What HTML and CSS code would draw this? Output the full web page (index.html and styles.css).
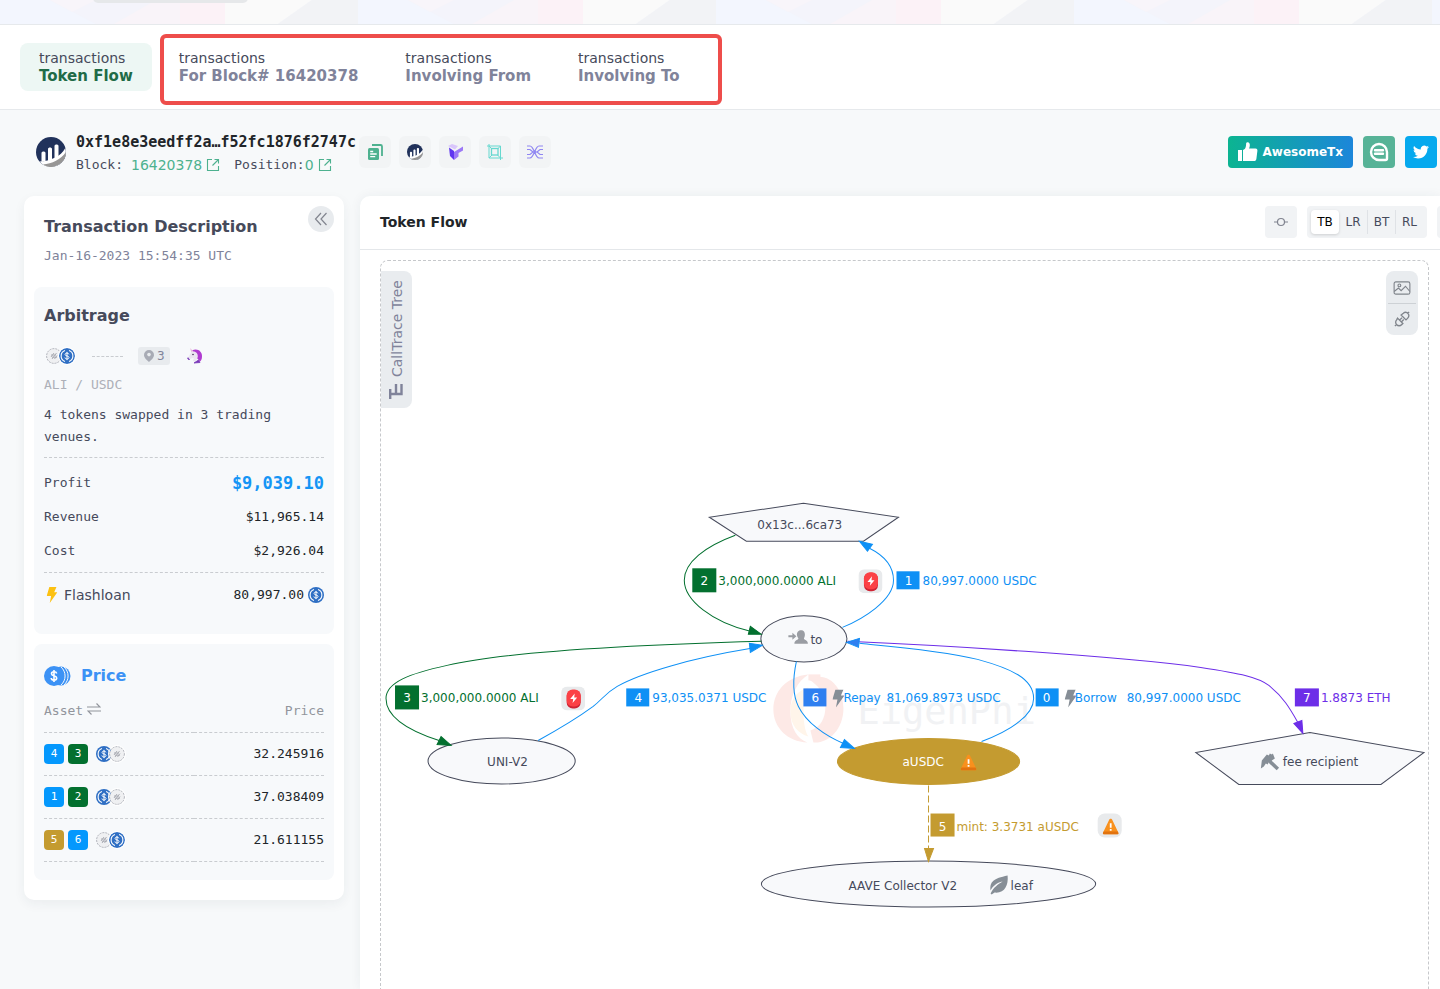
FILE: index.html
```html
<!DOCTYPE html>
<html lang="en">
<head>
    <meta charset="UTF-8">
    <meta name="viewport" content="width=device-width, initial-scale=1.0">
    <title>Token Flow</title>
    <link rel="stylesheet" href="styles.css">
</head>
<body>
    <!-- shared icons -->
    <svg class="defs" width="0" height="0" aria-hidden="true">
        <symbol id="usdc" viewBox="0 0 16 16">
            <circle cx="8" cy="8" r="8" fill="#2f6fc4"/>
            <path d="M6 2.600a5.700 5.700 0 0 0 0 10.800M10 2.600a5.700 5.700 0 0 1 0 10.800" fill="none" stroke="#fff" stroke-width="1.100"/>
            <path d="M9.900 6.400C9.700 5.500 9 5.100 8 5.100c-1.100 0-1.900.5-1.900 1.400 0 2 3.900.9 3.900 3 0 .9-.8 1.500-2 1.500s-2-.5-2.100-1.500M8 3.900v8.200" fill="none" stroke="#fff" stroke-width="1"/>
        </symbol>
        <symbol id="ali" viewBox="0 0 16 16">
            <circle cx="8" cy="8" r="7.400" fill="#eff0f2" stroke="#a9abb3" stroke-width=".9" stroke-dasharray="2 1"/>
            <path d="M5 9l3-4M6 11l4.500-6M8.500 11l2.500-3.500M5 7h5M6 9.200h5" fill="none" stroke="#a5a7af" stroke-width=".9"/>
        </symbol>
        <symbol id="etherscan" viewBox="0 0 30 30">
            <circle cx="15" cy="15" r="15" fill="#21325b"/>
            <path d="M3.500 24.500C14 24 25 19.500 29.300 11A15 15 0 0 1 7 27.700z" fill="#fff"/>
            <path d="M5.500 25V16c0-2 4-2 4 0v8zM12 24V12c0-2 4-2 4 0v11zM18.500 22V9c0-2 4-2 4 0v11z" fill="#fff"/>
            <path d="M7 27.600c9-1 18-5 22.900-12.600A14.950 14.950 0 0 1 7 27.600z" fill="#979695"/>
        </symbol>
        <symbol id="external" viewBox="0 0 14 14">
            <path d="M6 1.500H1.500v11h11V8M8.500 1.500h4v4M12.500 1.500L6.500 7.500" fill="none" stroke="#4db18f" stroke-width="1.100"/>
        </symbol>
        <symbol id="siren" viewBox="0 0 24 24">
            <rect width="24" height="24" rx="6" fill="#e8eaec"/>
            <rect x="5.500" y="3.500" width="14" height="18.500" rx="6" fill="#cf2434"/>
            <rect x="5.500" y="3" width="14" height="17" rx="6" fill="#fb4146"/>
            <path d="M13.500 7l-4.500 5.600h3L11.400 16.500l4.600-5.500h-3z" fill="#fff"/>
        </symbol>
        <symbol id="warn" viewBox="0 0 16 16">
            <path d="M8 0c.8 0 1.100.6 1.500 1.300L15.600 14c.5 1.100.2 2-1 2H1.400c-1.200 0-1.500-.9-1-2L6.500 1.300C6.900.6 7.200 0 8 0z" fill="#f8901d"/>
            <path d="M1 13h14l.6 1c.5 1.100.2 2-1 2H1.400c-1.200 0-1.500-.9-1-2z" fill="#e2730f"/>
            <path d="M8 4.800v4.400M8 10.500v1.800" stroke="#fff" stroke-width="1.800"/>
        </symbol>
        <symbol id="bolt" viewBox="0 0 12 18">
            <path d="M3 0h8L8.500 6H12L3.500 18 5 10H0z"/>
        </symbol>
    </svg>

    <div class="page">
        <div class="banner">
            <svg width="100%" height="24" aria-hidden="true">
                <defs>
                    <pattern id="facets" width="358" height="24" patternUnits="userSpaceOnUse">
                        <rect width="358" height="24" fill="#f3f6fe"/>
                        <path d="M50 0h130v24H96z" fill="#f4f4fb"/>
                        <path d="M50 0h46L72 12z" fill="#f8f5fa"/>
                        <path d="M156 0h24v24h-66z" fill="#f9f4f9"/>
                        <rect x="180" width="45" height="24" fill="#fcf2f7"/>
                        <path d="M225 0h87l-34 24h-53z" fill="#fafafa"/>
                        <path d="M312 0h46v24h-80z" fill="#f2f3f6"/>
                    </pattern>
                </defs>
                <rect width="100%" height="24" fill="url(#facets)"/>
                <rect x="93" y="-9" width="155" height="12" rx="5" fill="#e6e8ea"/>
            </svg>
        </div>

        <nav class="tabs">
            <a class="tab active" href="#token-flow"><span>transactions</span><b>Token Flow</b></a>
            <div class="tab-group">
                <a class="tab" href="#block"><span>transactions</span><b>For Block# 16420378</b></a>
                <a class="tab" href="#from"><span>transactions</span><b>Involving From</b></a>
                <a class="tab" href="#to"><span>transactions</span><b>Involving To</b></a>
            </div>
        </nav>

        <header class="tx-header">
            <svg class="tx-logo" width="30" height="30" aria-hidden="true"><use href="#etherscan"/></svg>
            <div class="tx-info">
                <h1>0xf1e8e3eedff2a…f52fc1876f2747c</h1>
                <p>
                    <span>Block:</span>
                    <a class="block-link" href="#block">16420378 <svg width="14" height="14"><use href="#external"/></svg></a>
                    <span class="position">Position:</span>
                    <a href="#position">0 <svg width="14" height="14"><use href="#external"/></svg></a>
                </p>
            </div>
            <div class="tools">
                <button class="tool" aria-label="Copy">
                    <svg width="16" height="16" viewBox="0 0 16 16"><path d="M5 1h8.500A1.500 1.500 0 0 1 15 2.500V12" fill="none" stroke="#4db18f" stroke-width="1.800"/><rect x="1" y="4" width="11" height="12" rx="1.500" fill="#4db18f"/><path d="M3.200 7.500h3M3.200 10h6.500M3.200 12.600h5" stroke="#fff" stroke-width="1.300"/></svg>
                </button>
                <button class="tool" aria-label="Etherscan"><svg width="16" height="16"><use href="#etherscan"/></svg></button>
                <button class="tool" aria-label="Tenderly">
                    <svg width="16" height="16" viewBox="0 0 16 16"><path d="M1 2l4-2 6 2-3 3.500z" fill="#d9c6fb"/><path d="M2 3.500l5 3.500v9l-4-4z" fill="#6037f0"/><path d="M7 16V8l9-5.500v4L11.500 9v3.500z" fill="#9c78f6"/></svg>
                </button>
                <button class="tool" aria-label="Blocks">
                    <svg width="16" height="16" viewBox="0 0 16 16" fill="none" stroke="#66d8cf"><path d="M2 0v14h14M0 2h13.500v14M2 2l3 3M13.500 2l-3 3M2 14l3-3M13.500 14l-3-3"/><rect x="4.500" y="4.500" width="6.500" height="6.500" stroke-width="1.300"/></svg>
                </button>
                <button class="tool" aria-label="Trace">
                    <svg width="16" height="16" viewBox="0 0 16 16" fill="none" stroke="#8f86f2" stroke-width="1.200"><path d="M0 2h3c4 0 5 12 9 12h4M0 14h3c4 0 5-12 9-12h4M0 5.500h3L6 8l-3 2.500H0M16 5.500h-3L10 8l3 2.500h3"/><circle cx="8" cy="8" r="1"/></svg>
                </button>
            </div>
            <div class="share">
                <button class="awesome">
                    <svg width="20" height="20" viewBox="0 0 20 20" fill="#fff"><path d="M0 8h4v11H0zM5 8c3-1 3-4 3.200-7 .3-1.200 3-1.200 3.500 1 .3 1.700 0 3-.7 4.500h6.500c1.500 0 2 1 1.900 2.200l-1 8c-.2 1.400-1 2.300-2.400 2.300H5z"/></svg>
                    AwesomeTx
                </button>
                <button class="square comment" aria-label="Comments">
                    <svg width="20" height="20" viewBox="0 0 20 20" fill="none" stroke="#fff"><path d="M10 2a8 8 0 1 0 0 16h6.500a1.500 1.500 0 0 0 1.500-1.500V10A8 8 0 0 0 10 2z" stroke-width="2.400"/><path d="M6 8.200h8M6 11.800h8" stroke-width="2.400" stroke-linecap="round"/></svg>
                </button>
                <button class="square twitter" aria-label="Twitter">
                    <svg width="16" height="16" viewBox="0 0 24 24" fill="#fff"><path d="M23.950 4.570a10 10 0 0 1-2.820.77 4.960 4.960 0 0 0 2.160-2.720c-.95.550-2 .95-3.130 1.180a4.920 4.920 0 0 0-8.380 4.480A13.930 13.930 0 0 1 1.640 3.160a4.920 4.920 0 0 0 1.520 6.570 4.900 4.900 0 0 1-2.230-.61v.06a4.920 4.920 0 0 0 3.950 4.830 5 5 0 0 1-2.210.08 4.940 4.940 0 0 0 4.600 3.420A9.870 9.870 0 0 1 0 19.540a14 14 0 0 0 7.550 2.210c9.050 0 14-7.500 14-13.980l-.02-.64a9.940 9.940 0 0 0 2.420-2.560z"/></svg>
                </button>
            </div>
        </header>

        <main class="content">
            <aside class="sidebar">
                <div class="side-head">
                    <div>
                        <h2>Transaction Description</h2>
                        <p class="date">Jan-16-2023 15:54:35 UTC</p>
                    </div>
                    <button class="collapse" aria-label="Collapse">
                        <svg width="14" height="14" viewBox="0 0 14 14" fill="none" stroke="#82858f" stroke-width="1.200"><path d="M7 1L1.500 7 7 13M12.500 1L7 7l5.500 6"/></svg>
                    </button>
                </div>

                <section class="card">
                    <h2>Arbitrage</h2>
                    <div class="route">
                        <span class="pair"><svg width="16" height="16"><use href="#ali"/></svg><svg width="16" height="16"><use href="#usdc"/></svg></span>
                        <span class="dash"></span>
                        <span class="venues"><svg width="10" height="12" viewBox="0 0 10 12"><path d="M5 0a5 5 0 0 1 5 5c0 3-3 5-5 7-2-2-5-4-5-7a5 5 0 0 1 5-5z" fill="#a8abb5"/><circle cx="5" cy="4.600" r="1.800" fill="#e8ebee"/></svg>3</span>
                        <svg width="16" height="16" viewBox="0 0 16 16"><path d="M5 2.500C10-.5 15 3 15 8c0 3-.5 4-2 5.500L9 9z" fill="#b03bd0"/><path d="M3 0l3.500 3.500-2 1z" fill="#e9b8dc"/><path d="M4.500 3.800C8 3 11 5 10.800 8.500c0 2-1.800 3-2.300 5.500L6 13c.5-2 1-2 .5-3-2-.5-3 1.500-4.500 1C.5 9.500 3 7 4.500 3.800z" fill="#ece6f1"/><path d="M1 9.500c-.8 1 0 2.500 1.800 2M7 15l4.500-3 1.500 2.500z" fill="#7839b8" stroke="#7839b8" stroke-width=".8"/><circle cx="6" cy="6.500" r=".8" fill="#443355"/></svg>
                    </div>
                    <p class="pair-name">ALI / USDC</p>
                    <p class="summary">4 tokens swapped in 3 trading venues.</p>
                    <dl class="figures">
                        <div><dt>Profit</dt><dd class="profit">$9,039.10</dd></div>
                        <div><dt>Revenue</dt><dd>$11,965.14</dd></div>
                        <div><dt>Cost</dt><dd>$2,926.04</dd></div>
                    </dl>
                    <dl class="figures loan">
                        <div>
                            <dt><svg width="12" height="16" viewBox="0 0 12 18" fill="#fcc112"><use href="#bolt" width="12" height="18"/></svg>Flashloan</dt>
                            <dd>80,997.00<svg width="16" height="16"><use href="#usdc"/></svg></dd>
                        </div>
                    </dl>
                </section>

                <section class="card price-card">
                    <h2><svg width="27" height="20" viewBox="0 0 27 20"><circle cx="17" cy="10" r="9.500" fill="#3c92f5"/><path d="M17 1a12 12 0 0 1 0 18M20 1a12 12 0 0 1 0 18" fill="none" stroke="#f7f9fb" stroke-width="1"/><circle cx="10" cy="10" r="10" fill="#3c92f5"/><path d="M12.700 7.500c-.3-1.200-1.300-1.700-2.700-1.700s-2.500.6-2.500 1.900c0 2.700 5.200 1.500 5.200 4.300 0 1.400-1.200 2.100-2.700 2.100S7.300 13.400 7.200 12M10 4v12" fill="none" stroke="#fff" stroke-width="1.600"/></svg>Price</h2>
                    <table>
                        <thead>
                            <tr><th>Asset <svg width="14" height="12" viewBox="0 0 14 12" fill="none" stroke="#92959c" stroke-width="1.200"><path d="M0 4h13L9.500.5M14 8H1l3.500 3.500"/></svg></th><th>Price</th></tr>
                        </thead>
                        <tbody>
                            <tr>
                                <td><span class="asset"><i class="badge blue">4</i><i class="badge green">3</i><span class="pair"><svg width="16" height="16"><use href="#usdc"/></svg><svg width="16" height="16"><use href="#ali"/></svg></span></span></td>
                                <td>32.245916</td>
                            </tr>
                            <tr>
                                <td><span class="asset"><i class="badge blue">1</i><i class="badge green">2</i><span class="pair"><svg width="16" height="16"><use href="#usdc"/></svg><svg width="16" height="16"><use href="#ali"/></svg></span></span></td>
                                <td>37.038409</td>
                            </tr>
                            <tr>
                                <td><span class="asset"><i class="badge gold">5</i><i class="badge blue">6</i><span class="pair"><svg width="16" height="16"><use href="#ali"/></svg><svg width="16" height="16"><use href="#usdc"/></svg></span></span></td>
                                <td>21.611155</td>
                            </tr>
                        </tbody>
                    </table>
                </section>
            </aside>

            <section class="panel">
                <div class="panel-head">
                    <h2>Token Flow</h2>
                    <button class="node-btn" aria-label="Node"><svg width="14" height="10" viewBox="0 0 14 10" fill="none" stroke="#80838f" stroke-width="1.200"><path d="M0 5h3.500M10.500 5H14"/><circle cx="7" cy="5" r="3.500"/></svg></button>
                    <div class="directions">
                        <button class="on">TB</button>
                        <button>LR</button>
                        <button>BT</button>
                        <button>RL</button>
                    </div>
                    <button class="node-btn more" aria-label="More"></button>
                </div>

                <div class="graph">
                    <svg class="flow" viewBox="381 261 1046 728">
                        <!-- watermark -->
                        <g class="watermark">
                            <path d="M808 674c-22 2-35 17-35 35s14 32 34 33c-10-4-17-14-17-31s7-30 18-37z" fill="#fde9e6"/>
                            <path d="M808 679c20-10 35 9 35 29s-14 35-30 34l-3-12c10-3 15-12 15-24s-7-22-17-27z" fill="#fde9e6"/>
                            <path d="M808 687c-14 4-18 15-18 24 0 14 8 22 18 25-6-8-7-39 0-49z" fill="#fff5ea"/>
                            <path d="M808 674h12v6h-12z" fill="#fde9e6"/>
                            <text x="857" y="724">EigenPhi</text>
                        </g>

                        <!-- nodes -->
                        <g class="node">
                            <path d="M803 503l95 14-35 24H746l-37-24z"/>
                            <ellipse cx="803.500" cy="638.500" rx="43" ry="23"/>
                            <ellipse cx="501.500" cy="760.500" rx="73.500" ry="23"/>
                            <ellipse class="token" cx="928" cy="761" rx="91" ry="23"/>
                            <ellipse cx="928" cy="883.500" rx="167" ry="23"/>
                            <path d="M1309 732l114 20-43 32h-142l-43-32z"/>
                            <text x="757" y="529">0x13c...6ca73</text>
                            <text x="810" y="644">to</text>
                            <text x="487" y="766">UNI-V2</text>
                            <text class="light" x="902" y="766">aUSDC</text>
                            <text x="848" y="889">AAVE Collector V2</text>
                            <text x="1010" y="889">leaf</text>
                            <text x="1282" y="766">fee recipient</text>
                        </g>
                        <g fill="#9a9da3">
                            <path d="M788 635h4v-2.500l4 3.500-4 3.500V637h-4z"/>
                            <path d="M800.500 630c3 0 4 2 4 4.500 0 2-1 3-1 4 1 1.500 4 1.500 4 5H794c0-3.500 3-3.500 4-5 0-1-1.500-2-1.500-4s1-4.500 4-4.500z"/>
                        </g>
                        <path d="M1007 875c1 10-3 18-13 17l-3 2-1-1c3-6 7-9 12-12-6 1-10 5-12 9-1-9 3-12 17-15z" fill="#868e96"/>
                        <path d="M1260 768l1-8 5-6 2 1 1-2 2 1 1-1 2 5-3 2-1 2-2-1-1 3-2-1-2 3z" fill="#868e96"/>
                        <path d="M1268 760l9 8.500" stroke="#868e96" stroke-width="3.600"/>
                        <use href="#warn" x="960" y="754" width="16" height="16"/>

                        <!-- edges -->
                        <g class="edge c-green">
                            <path d="M735 535C705 546 684 562 684 580C684 600 712 622 750 631"/>
                            <path d="M761 641C690 643 520 648 447 665C410 673 386 682 386 698C386 716 408 730 439 740"/>
                            <path class="tip" d="M761 634l-11-8-2 8z"/>
                            <path class="tip" d="M451 745l-10-9-4 8z"/>
                        </g>
                        <g class="edge c-purple">
                            <path d="M847 641C940 645 1110 655 1200 667C1240 673 1258 677 1268 685C1282 696 1289 708 1297 722"/>
                            <path class="tip" d="M1302 733l-1-13-8 3z"/>
                        </g>
                        <g class="edge c-blue">
                            <path d="M842 627C862 619 893 600 893 580C893 568 887 557 869 548"/>
                            <path d="M538 740C560 728 578 717 593 706C603 698 605 693 617 686C640 673 690 658 751 648"/>
                            <path d="M796 661C793 675 791 692 798 706C806 722 824 735 843 743"/>
                            <path d="M981 741C1010 730 1033 715 1033 698C1033 678 1010 668 977 659C940 650 890 646 859 643"/>
                            <path class="tip" d="M859 541l13 3-5 7z"/>
                            <path class="tip" d="M762 645l-13-2 1 9z"/>
                            <path class="tip" d="M854 748l-10-9-4 8z"/>
                            <path class="tip mix" d="M846 642l13-4-1 9z"/>
                        </g>
                        <g class="edge c-gold">
                            <path d="M928 785v64" stroke-dasharray="7 3"/>
                            <path class="tip" d="M928 861l-4-13h9z"/>
                        </g>

                        <!-- edge labels -->
                        <g class="label c-green">
                            <rect x="692" y="568" width="24" height="24"/><text class="num" x="704" y="585">2</text>
                            <text x="718" y="585">3,000,000.0000 ALI</text>
                            <rect x="395" y="685" width="24" height="24"/><text class="num" x="407" y="702">3</text>
                            <text x="421" y="702">3,000,000.0000 ALI</text>
                        </g>
                        <g class="label c-blue">
                            <rect x="896" y="571" width="23" height="18"/><text class="num" x="908" y="585">1</text>
                            <text x="922" y="585">80,997.0000 USDC</text>
                            <rect x="626" y="688" width="23" height="18"/><text class="num" x="638" y="702">4</text>
                            <text x="652" y="702">93,035.0371 USDC</text>
                            <rect class="mix" x="803" y="688" width="23" height="18"/><text class="num" x="815" y="702">6</text>
                            <use class="flash" href="#bolt" x="832" y="689" width="12" height="18"/>
                            <text x="843" y="702">Repay</text><text x="886" y="702">81,069.8973 USDC</text>
                            <rect x="1035" y="688" width="23" height="18"/><text class="num" x="1046" y="702">0</text>
                            <use class="flash" href="#bolt" x="1064" y="689" width="12" height="18"/>
                            <text x="1074" y="702">Borrow</text><text x="1126" y="702">80,997.0000 USDC</text>
                        </g>
                        <g class="label c-gold">
                            <rect x="930" y="813" width="24" height="23"/><text class="num" x="942" y="830">5</text>
                            <text x="956" y="830">mint: 3.3731 aUSDC</text>
                        </g>
                        <g class="label c-purple">
                            <rect x="1294" y="688" width="24" height="18"/><text class="num" x="1306" y="702">7</text>
                            <text x="1320" y="702">1.8873 ETH</text>
                        </g>
                        <use href="#siren" x="858" y="569" width="24" height="24"/>
                        <use href="#siren" x="561" y="686" width="24" height="24"/>
                        <rect x="1097" y="813" width="24" height="24" rx="7" fill="#e8eaec"/>
                        <use href="#warn" x="1102" y="818" width="16" height="16"/>
                    </svg>

                    <button class="calltrace">
                        <svg width="16" height="16" viewBox="0 0 16 16" fill="none" stroke="#80839a" stroke-width="2.400"><path d="M0 2.200h10M5 2v11.500h10M5 8h10"/></svg>
                        CallTrace Tree
                    </button>
                    <div class="graph-tools">
                        <button aria-label="Save image"><svg width="18" height="14" viewBox="0 0 20 16" fill="none" stroke="#80858c" stroke-width="1.300"><rect x="1" y="1" width="18" height="14" rx="2"/><circle cx="7" cy="5" r="1.600"/><path d="M1 12l5-4 3 3 5-5 5 6"/></svg></button>
                        <button aria-label="Copy link"><svg width="16" height="16" viewBox="0 0 18 18" fill="none" stroke="#80858c" stroke-width="1.500"><path d="M1 17l2-2M15 3l2-2M8 4.500l5.500 5.500 2-2a3.600 3.600 0 0 0-5-5.500zM4 8l6 6-1.500 1.500a3.800 3.800 0 0 1-5.500-5.500zM6.500 10l2.500-2.500M8.500 12l2.500-2.500"/></svg></button>
                    </div>
                </div>
            </section>
        </main>
    </div>
</body>
</html>
```
FILE: styles.css
```css
* {
    box-sizing: border-box;
}
body {
    font-family: "DejaVu Sans", Verdana, sans-serif;
    font-size: 14px;
    color: #464a5b;
    margin: 0;
    background-color: #f7f9fa;
}
h1, h2, p, dl, dd {
    margin: 0;
}
h2 {
    font-size: 16px;
    line-height: 24px;
}
a {
    text-decoration: none;
}
button {
    font-family: inherit;
    border: none;
    padding: 0;
    display: flex;
    align-items: center;
    justify-content: center;
    cursor: pointer;
}
svg {
    display: block;
    flex-shrink: 0;
}
.defs {
    position: absolute;
}
.page {
    height: 100vh;
    display: flex;
    flex-direction: column;
    overflow: hidden;
}
.banner {
    border-bottom: 1px solid #e6e9ec;
}

/* tabs */
.tabs {
    display: flex;
    align-items: center;
    gap: 8px;
    padding: 8px 20px 4px;
    min-height: 85px;
    background-color: #fff;
    border-bottom: 1px solid #e6e9ec;
}
.tab {
    line-height: 18px;
    color: #464a5b;
    white-space: nowrap;
}
.tab span, .tab b {
    display: block;
}
.tab b {
    font-size: 15px;
    color: #80839a;
}
.tab.active {
    padding: 6px 19px;
    margin-bottom: 4px;
    border-radius: 8px;
    background-color: #edf7f4;
}
.tab.active b {
    color: #1f6b47;
}
.tab-group {
    display: flex;
    gap: 47px;
    padding: 11px 38px 16px 15px;
    border: 4px solid #ee4d4b;
    border-radius: 6px;
}

/* header */
.tx-header {
    display: flex;
    align-items: center;
    padding: 18px 3px 20px 36px;
}
.tx-info {
    margin: 0 10px;
    padding-top: 2px;
    font-family: "DejaVu Sans Mono", monospace;
}
.tx-info h1 {
    font-size: 15px;
    line-height: 24px;
    color: #212529;
    width: 273px;
    white-space: nowrap;
}
.tx-info p {
    display: flex;
    align-items: center;
    font-size: 13px;
    line-height: 22px;
}
.tx-info a {
    display: flex;
    align-items: center;
    gap: 4px;
    font: 14px/22px "DejaVu Sans", sans-serif;
    color: #4db18f;
}
.block-link {
    margin-left: 8px;
}
.position {
    margin-left: 14px;
}
.tools {
    display: flex;
    gap: 8px;
}
.tool {
    width: 32px;
    height: 32px;
    border-radius: 6px;
    background-color: #f2f4f5;
}
.share {
    display: flex;
    gap: 10px;
    margin-left: auto;
}
.awesome {
    gap: 5px;
    height: 32px;
    padding: 0 10px;
    border-radius: 4px;
    background: linear-gradient(90deg, #0cb491, #1c86da);
    color: #fff;
    font-size: 12px;
    font-weight: bold;
}
.square {
    width: 32px;
    height: 32px;
    border-radius: 4px;
}
.comment {
    background-color: #57b397;
}
.twitter {
    background-color: #06a9ee;
}

/* sidebar */
.content {
    flex: 1;
    display: flex;
    align-items: flex-start;
    gap: 16px;
    padding-left: 24px;
    min-height: 0;
}
.sidebar {
    flex: 0 0 320px;
    padding: 10px 10px 20px;
    border-radius: 10px;
    background-color: #fff;
    box-shadow: 0 4px 12px rgba(40,50,60,0.06);
}
.side-head {
    display: flex;
    justify-content: space-between;
    padding: 0 0 20px 10px;
}
.side-head h2 {
    margin-top: 9px;
}
.date {
    font: 13px/20px "DejaVu Sans Mono", monospace;
    margin-top: 7px;
    padding-bottom: 1px;
    color: #80839a;
}
.collapse {
    width: 26px;
    height: 26px;
    border-radius: 50%;
    background-color: #e8ebee;
}
.card {
    padding: 17px 10px 22px;
    border-radius: 8px;
    background-color: #f7f9fb;
    font-family: "DejaVu Sans Mono", monospace;
    font-size: 13px;
}
.card h2 {
    font-family: "DejaVu Sans", sans-serif;
}
.route {
    display: flex;
    align-items: center;
    height: 24px;
    margin-top: 16px;
    padding-left: 2px;
}
.pair {
    display: flex;
}
.pair svg + svg {
    margin-left: -3px;
    border-radius: 50%;
    box-shadow: 0 0 0 1px #fff;
}
.dash {
    width: 31px;
    margin: 0 15px 0 17px;
    border-top: 1px dashed #c9ccd0;
}
.venues {
    display: flex;
    align-items: center;
    gap: 3px;
    height: 18px;
    padding: 0 5px 0 6px;
    margin-right: 17px;
    border-radius: 3px;
    background-color: #e8ebee;
    color: #80839a;
    font: 12px/18px "DejaVu Sans", sans-serif;
}
.pair-name {
    margin-top: 7px;
    line-height: 20px;
    color: #adb0b8;
}
.summary {
    margin-top: 9px;
    line-height: 22px;
}
.figures {
    margin-top: 9px;
    padding: 8px 0 4px;
    border-top: 1px dashed #c9ccd0;
}
.figures div {
    display: flex;
    justify-content: space-between;
    line-height: 34px;
}
.figures dd {
    color: #212529;
}
.figures .profit {
    font-size: 17px;
    font-weight: bold;
    color: #1595f5;
}
.loan {
    margin-top: 0;
    padding: 5px 0 0;
}
.loan dt, .loan dd {
    display: flex;
    align-items: center;
}
.loan dt {
    gap: 6px;
    padding-left: 2px;
    font: 14px/34px "DejaVu Sans", sans-serif;
}
.loan dd {
    gap: 4px;
}
.price-card {
    margin-top: 10px;
    padding: 20px 10px 18px;
}
.price-card h2 {
    display: flex;
    align-items: center;
    gap: 10px;
    color: #3c92f5;
}
table {
    width: 100%;
    margin-top: 1px;
    border-collapse: collapse;
}
th, td {
    height: 43px;
    padding: 0;
    border-bottom: 1px dashed #c9ccd0;
    text-align: left;
    color: #212529;
}
th {
    font-weight: normal;
    color: #92959c;
}
th svg {
    display: inline-block;
    margin-left: -4px;
}
th:last-child, td:last-child {
    text-align: right;
}
.asset {
    display: flex;
    gap: 4px;
}
.asset .pair {
    align-items: center;
    margin-left: 4px;
}
.badge {
    width: 20px;
    border-radius: 4px;
    font-size: 11px;
    font-style: normal;
    line-height: 20px;
    text-align: center;
    color: #fff;
}
.badge.blue {
    background-color: #0498fd;
}
.badge.green {
    background-color: #03702f;
}
.badge.gold {
    background-color: #c49b30;
}

/* graph panel */
.panel {
    flex: 1;
    align-self: stretch;
    display: flex;
    flex-direction: column;
    min-width: 0;
    border-radius: 10px 0 0 0;
    background-color: #fff;
    box-shadow: 0 0 12px rgba(40,50,60,0.06);
}
.panel-head {
    display: flex;
    gap: 10px;
    padding: 10px 0 11px 20px;
    overflow: hidden;
    border-bottom: 1px solid #e4e7ea;
}
.panel-head h2 {
    flex: 1;
    font-size: 14px;
    line-height: 32px;
    color: #212529;
}
.node-btn {
    flex: 0 0 32px;
    height: 32px;
    border-radius: 4px;
    background-color: #f1f3f5;
}
.more {
    margin-right: -29px;
}
.directions {
    display: flex;
    padding: 4px;
    height: 32px;
    border-radius: 4px;
    background-color: #f1f3f5;
}
.directions button {
    width: 28px;
    background: none;
    border-left: 1px solid #dfe2e6;
    font-size: 12px;
    color: #464a5b;
}
.directions .on {
    border-radius: 4px;
    background-color: #fff;
    box-shadow: 0 1px 3px rgba(0,0,0,0.15);
    color: #000;
}
.directions .on, .directions .on + button {
    border-left: none;
}
.graph {
    flex: 1;
    position: relative;
    min-height: 0;
    margin: 10px 11px 0 20px;
    overflow: hidden;
    border: 1px dashed #c6c8cb;
    border-bottom: none;
    border-radius: 8px 8px 0 0;
}
.calltrace {
    position: absolute;
    left: 0;
    top: 10px;
    width: 31px;
    height: 137px;
    gap: 6px;
    writing-mode: vertical-rl;
    transform: rotate(180deg);
    border-radius: 8px 0 0 8px;
    background-color: #e9ecef;
    font-size: 14px;
    color: #80839a;
}
.calltrace svg {
    transform: rotate(90deg);
}
.graph-tools {
    position: absolute;
    right: 10px;
    top: 10px;
    width: 32px;
    padding: 2px;
    border-radius: 8px;
    background-color: #e9ecef;
}
.graph-tools button {
    width: 28px;
    height: 30px;
    background: none;
}
.graph-tools button + button {
    border-top: 1px solid #cdd1d5;
}
.flow {
    width: 100%;
}
.flow text {
    font-size: 12px;
    fill: #464a5b;
}
.flow .watermark text {
    font-family: "DejaVu Sans Mono", monospace;
    font-size: 37px;
    fill: #f1f2f4;
}
.node path, .node ellipse {
    fill: #f8f9fb;
    stroke: #464a5b;
}
.node .token {
    fill: #c49b30;
    stroke: #c49b30;
}
.flow .light {
    fill: #fff;
}
.flow .num {
    text-anchor: middle;
}
.edge path {
    fill: none;
    stroke: currentColor;
}
.edge .tip {
    fill: currentColor;
}
.label rect {
    fill: currentColor;
}
.flow .label text {
    fill: currentColor;
}
.flow .label .num {
    fill: #fff;
}
.flow .mix {
    fill: #2f7ff0;
}
.flash {
    fill: #868e96;
}
.c-green {
    color: #03702f;
}
.c-blue {
    color: #0e90f5;
}
.c-gold {
    color: #c49b30;
}
.c-purple {
    color: #6d2ee8;
}
```
